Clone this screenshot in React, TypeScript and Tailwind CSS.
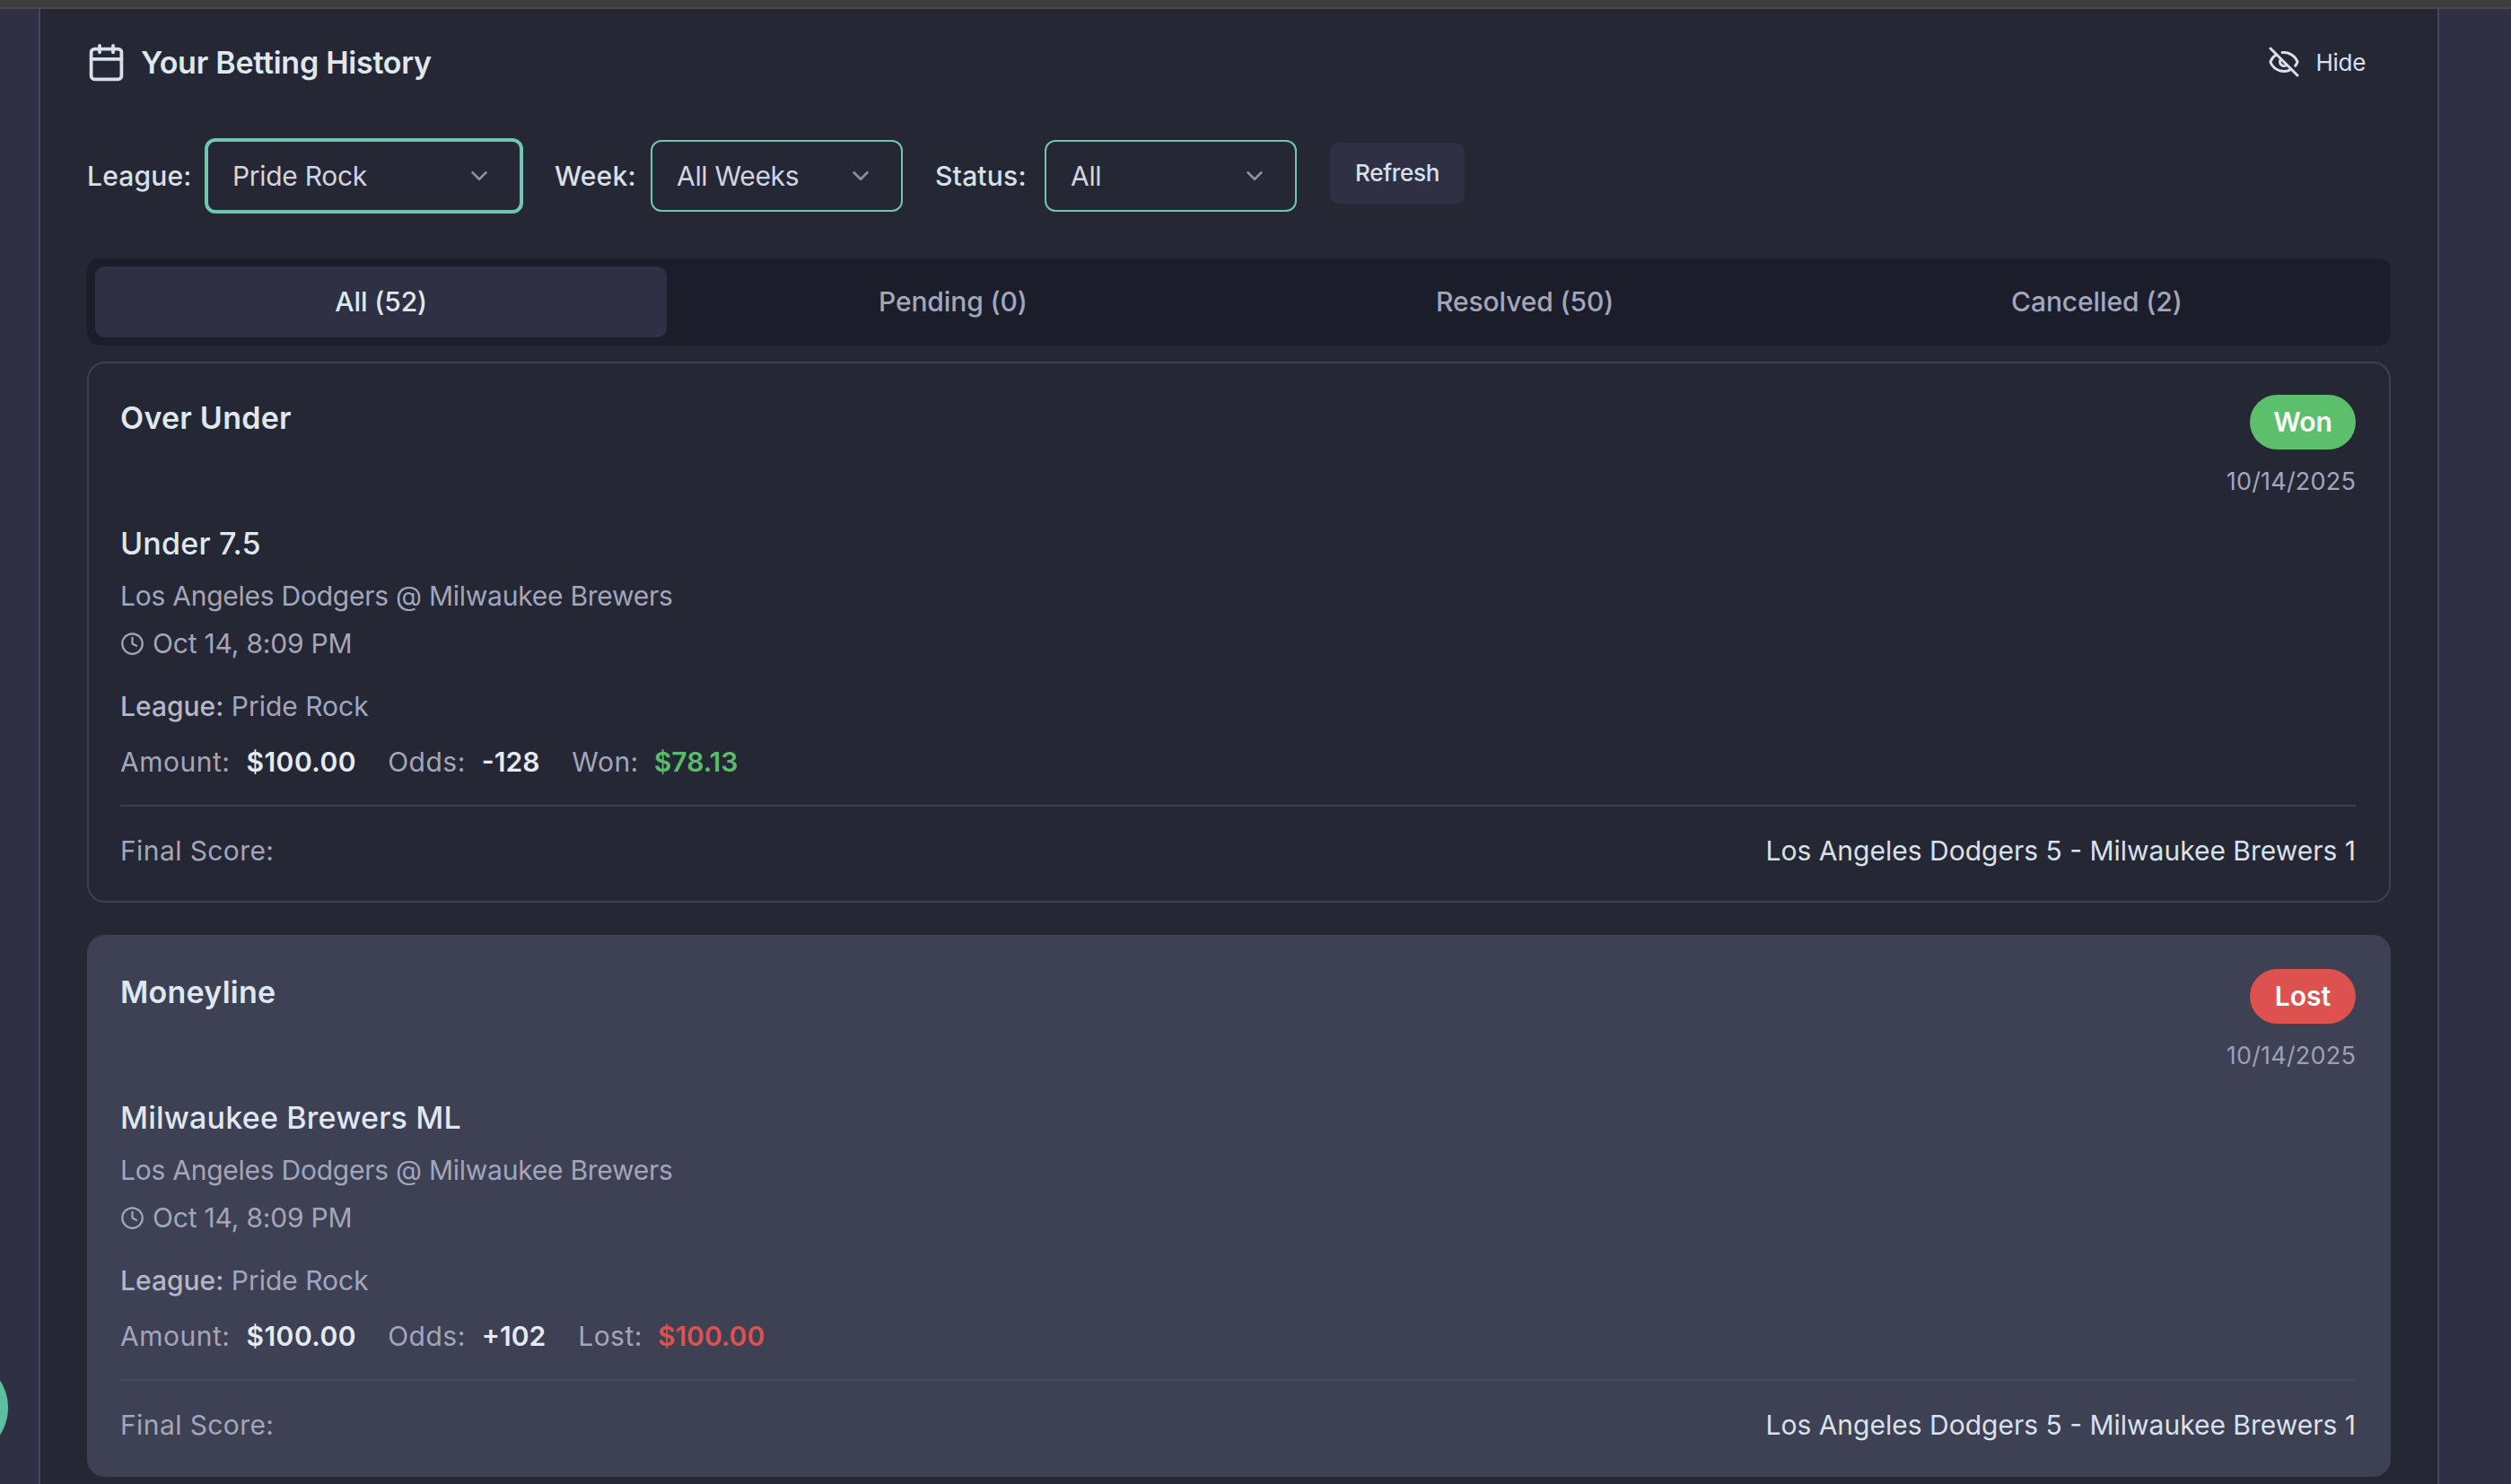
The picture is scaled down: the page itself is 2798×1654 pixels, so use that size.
import { Calendar, ChevronDown, Clock, EyeOff } from "lucide-react";

type Bet = {
  market: string;
  pick: string;
  status: "Won" | "Lost";
  odds: string;
  payout: string;
  highlighted?: boolean;
};

const bets: Bet[] = [
  { market: "Over Under", pick: "Under 7.5", status: "Won", odds: "-128", payout: "$78.13" },
  { market: "Moneyline", pick: "Milwaukee Brewers ML", status: "Lost", odds: "+102", payout: "$100.00", highlighted: true },
];

const filters = [
  { label: "League:", value: "Pride Rock", labelWidth: "w-[114px]", gap: "mr-[35px]", width: "w-[355px]", focused: true },
  { label: "Week:", value: "All Weeks", labelWidth: "w-[90px]", gap: "mr-[36px]", width: "w-[281px]", focused: false },
  { label: "Status:", value: "All", labelWidth: "w-[105px]", gap: "mr-[37px]", width: "w-[281px]", focused: false },
];

const tabs = ["All (52)", "Pending (0)", "Resolved (50)", "Cancelled (2)"];

function BetCard({ bet }: { bet: Bet }) {
  const won = bet.status === "Won";
  return (
    <div
      className={`rounded-[20px] border-2 pr-[37px] pl-[35px] ${
        bet.highlighted ? "h-[604px] border-[#3e4054] bg-[#3e4054] pt-[36px]" : "h-[603px] border-[#3d3f55] pt-[35px]"
      }`}
    >
      <div className="flex items-start justify-between">
        <h3 className="mt-[4px] text-[34px] leading-[44px] font-semibold tracking-[0.25px] text-[#dfe7ef]">{bet.market}</h3>
        <div className="flex flex-col items-end">
          <span
            className={`flex h-[61px] w-[118px] items-center justify-center rounded-full text-[30px] font-semibold text-white ${
              won ? "bg-[#5cbf6b]" : "bg-[#dd524e]"
            }`}
          >
            {bet.status}
          </span>
          <span className={`mt-[20px] text-[27px] leading-[32px] tracking-[0.2px] ${bet.highlighted ? "text-[#9c9fb3]" : "text-[#a3a6ba]"}`}>10/14/2025</span>
        </div>
      </div>
      <div className="mt-[31px] text-[34px] leading-[44px] font-medium tracking-[0.2px] text-[#dfe7ef]">{bet.pick}</div>
      <div className="mt-[14px] text-[30px] leading-[44px] tracking-[-0.25px] text-[#a3a6ba]">Los Angeles Dodgers @ Milwaukee Brewers</div>
      <div className="mt-[9px] flex h-[44px] items-center gap-[9px] text-[30px] tracking-[-0.2px] text-[#a3a6ba]">
        <Clock size={27} strokeWidth={2} />
        <span>Oct 14, 8:09 PM</span>
      </div>
      <div className="mt-[26px] h-[44px] text-[30px] leading-[44px] text-[#a3a6ba]">
        <span className="font-medium text-[#b4b7c9]">League:</span> Pride Rock
      </div>
      <div className="mt-[18px] flex h-[44px] items-center text-[30px] tracking-[0.5px] text-[#a3a6ba]">
        <span>Amount:</span>
        <span className="ml-[18px] font-semibold text-[#e4ebf2]">$100.00</span>
        <span className="ml-[35px]">Odds:</span>
        <span className="ml-[18px] font-semibold tracking-[0px] text-[#e4ebf2]">{bet.odds}</span>
        <span className="ml-[36px]">{won ? "Won:" : "Lost:"}</span>
        <span className={`ml-[17px] font-semibold tracking-[0px] ${won ? "text-[#58bd68]" : "text-[#dd524e]"}`}>{bet.payout}</span>
      </div>
      <div className={`mt-[26px] h-[2px] ${bet.highlighted ? "bg-[#47495d]" : "bg-[#3d3f55]"}`} />
      <div className="mt-[27px] flex h-[44px] items-center justify-between text-[30px]">
        <span className="tracking-[0.4px] text-[#a3a6ba]">Final Score:</span>
        <span className="text-[#d9e1ea]">Los Angeles Dodgers 5 - Milwaukee Brewers 1</span>
      </div>
    </div>
  );
}

export default function App() {
  return (
    <div className="relative flex h-[1654px] w-full flex-col overflow-hidden bg-[#2f3044] font-['Inter',sans-serif]">
      <div className="h-[10px] shrink-0 border-b-2 border-[#4a4a4a] bg-[#3e3e3e]" />
      <div className="flex min-h-0 flex-1">
        <div className="w-[43px] shrink-0" />
        <main className="w-[2675px] shrink-0 border-x-2 border-[#44465c] bg-[#252735] px-[52px]">
          <div className="flex h-[118px] items-center justify-between">
            <div className="flex items-center gap-[16px]">
              <Calendar size={45} strokeWidth={2} className="ml-[-1px] text-[#d8e0ea]" />
              <h2 className="text-[34px] font-semibold tracking-[-0.25px] text-[#dfe7ef]">Your Betting History</h2>
            </div>
            <button className="mr-[28px] flex items-center gap-[18px] text-[26px] tracking-[-0.3px] text-[#d8e0ea]">
              <EyeOff size={36} strokeWidth={2} />
              Hide
            </button>
          </div>

          <div className="mt-[26px] flex h-[84px] items-center">
            {filters.map((f) => (
              <div key={f.label} className={`flex items-center ${f.gap}`}>
                <label className={`${f.labelWidth} mr-[17px] text-[30px] font-medium tracking-[0.2px] whitespace-nowrap text-[#d8e0ea]`}>{f.label}</label>
                <div
                  className={`flex items-center justify-between rounded-[12px] pr-[30px] pl-[27px] text-[30px] tracking-[-0.3px] text-[#cfd6e0] ${f.width} ${
                    f.focused ? "h-[84px] border-[4px] border-[#6fc7b0]" : "h-[80px] border-2 border-[#6fc7b0]"
                  }`}
                >
                  {f.value}
                  <ChevronDown size={30} strokeWidth={2} className="text-[#8d90a3]" />
                </div>
              </div>
            ))}
            <button className="mb-[7px] flex h-[68px] w-[150px] items-center justify-center rounded-[10px] bg-[#2f3044] text-[26px] font-medium tracking-[-0.3px] text-[#d8e0ea]">
              Refresh
            </button>
          </div>

          <div className="mt-[50px] grid h-[97px] grid-cols-4 rounded-[14px] bg-[#1b1d2a] p-[9px]">
            {tabs.map((t, i) => (
              <button
                key={t}
                className={`rounded-[10px] text-[30px] font-medium tracking-[-0.1px] ${
                  i === 0 ? "bg-[#2f3044] text-[#dfe7ef]" : "text-[#a3a6ba]"
                }`}
              >
                {t}
              </button>
            ))}
          </div>

          <div className="mt-[18px] flex flex-col gap-[36px]">
            {bets.map((b) => (
              <BetCard key={b.market} bet={b} />
            ))}
          </div>
        </main>
        <div className="flex-1" />
      </div>
      <div className="absolute top-[1513px] left-[-103px] h-[112px] w-[112px] rounded-full bg-[#5dbf9f]" />
    </div>
  );
}
